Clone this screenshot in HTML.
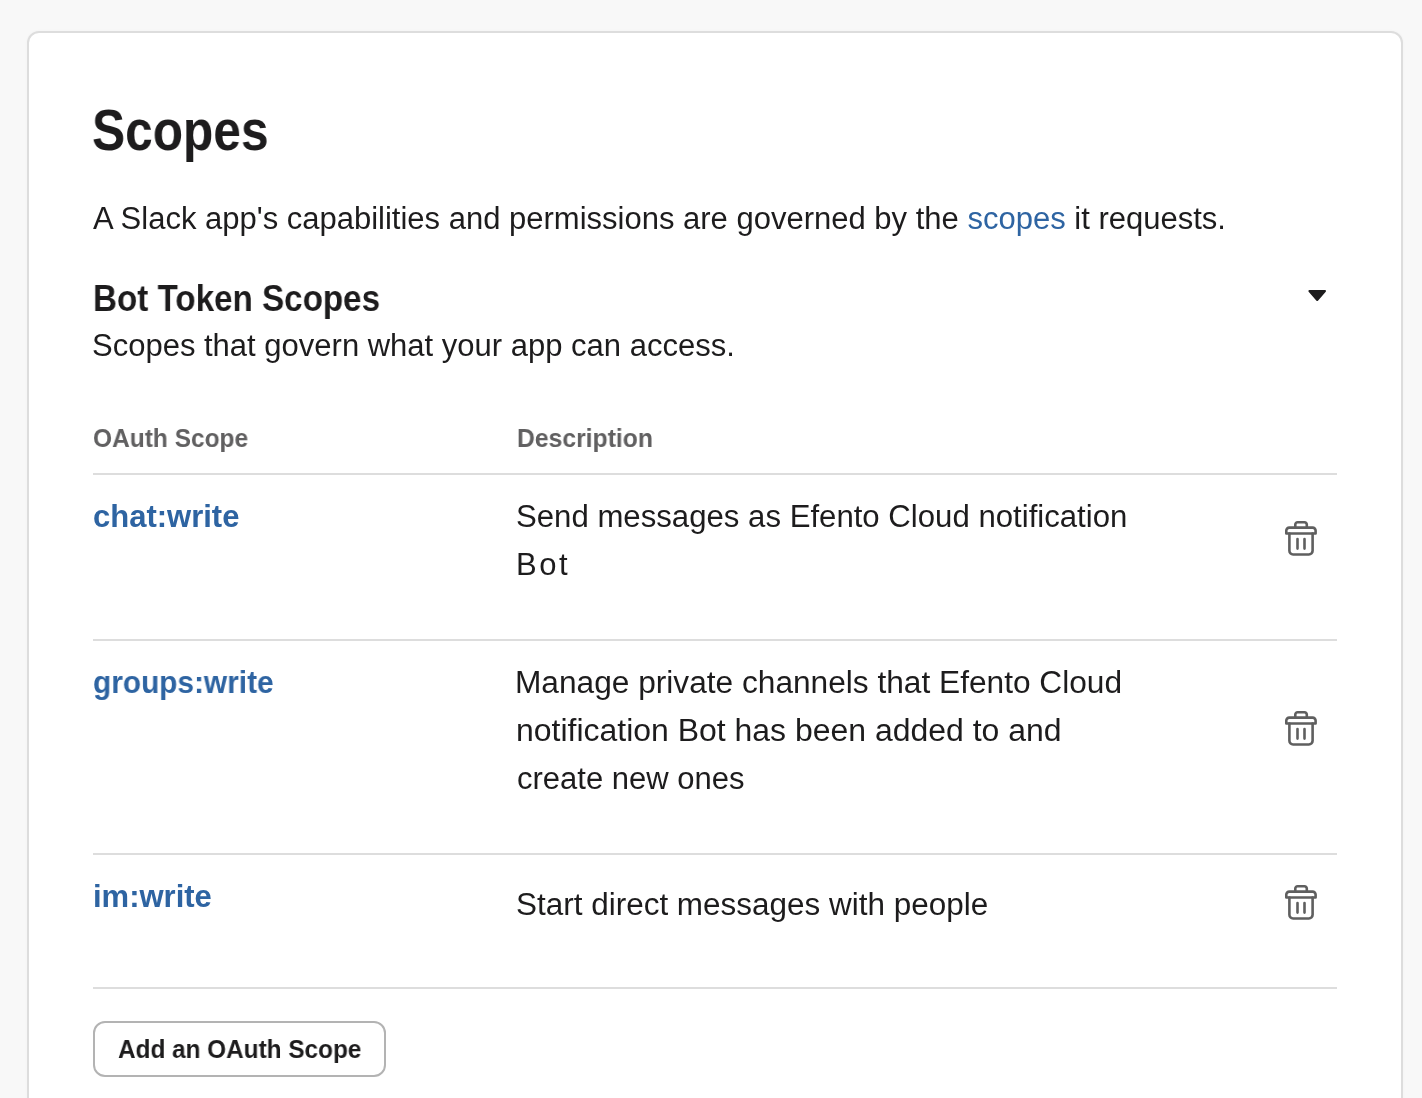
<!DOCTYPE html>
<html>
<head>
<meta charset="utf-8">
<style>
html, body { margin: 0; padding: 0; }
body { width: 1422px; height: 1098px; overflow: hidden; background: #f8f8f8; position: relative; font-family: "Liberation Sans", sans-serif; color: #1d1c1d; }
.card { position: absolute; left: 27px; top: 31px; width: 1372px; box-shadow: 0 0 3px rgba(0,0,0,0.03); height: 1200px; border: 2px solid #dddddd; border-radius: 12px; background: #ffffff; }
.t { position: absolute; white-space: nowrap; line-height: 1; transform-origin: 0 0; will-change: transform; }
.b { font-weight: bold; }
.link { color: #2e64a2; }
.grey { color: #616061; }
.hr { position: absolute; left: 93px; width: 1244px; height: 2px; background: #dddddd; }
.trash { position: absolute; left: 1280px; width: 42px; height: 44px; }
.btn { position: absolute; left: 93px; top: 1021px; width: 289px; height: 52px; border: 2px solid #b3b3b3; border-radius: 12px; background: #fff; }
</style>
</head>
<body>
<div class="card"></div>

<div class="t b" id="title" style="left:92.3px; top:101px; font-size:58px; transform:scaleX(0.856);">Scopes</div>
<div class="t" id="para" style="left:93px; top:203px; font-size:31px;">A Slack app's capabilities and permissions are governed by the <span class="link">scopes</span> it requests.</div>

<div class="t b" id="bts" style="left:92.5px; top:280px; font-size:37px; transform:scaleX(0.897);">Bot Token Scopes</div>
<svg style="position:absolute; left:1300px; top:282px;" width="34" height="26" viewBox="1300 282 34 26">
  <path d="M1309.4 291 L1325 291 L1317.2 300 Z" fill="#1d1c1d" stroke="#1d1c1d" stroke-width="2" stroke-linejoin="round"/>
</svg>
<div class="t" id="sub" style="left:92px; top:330px; font-size:31px;">Scopes that govern what your app can access.</div>

<div class="t b grey" id="h1" style="left:92.5px; top:425px; font-size:26px; transform:scaleX(0.942);">OAuth Scope</div>
<div class="t b grey" id="h2" style="left:516.5px; top:425px; font-size:26px; transform:scaleX(0.95);">Description</div>
<div class="hr" style="top:473px;"></div>

<!-- row 1 -->
<div class="t b link" id="r1s" style="left:92.7px; top:501px; font-size:31px;">chat:write</div>
<div class="t" id="r1d1" style="left:516px; top:501px; font-size:31px; transform:scaleX(1.005);">Send messages as Efento Cloud notification</div>
<div class="t" id="r1d2" style="left:516px; top:549px; font-size:31px; letter-spacing:2.5px;">Bot</div>
<svg class="trash" style="top:516px;" viewBox="0 0 42 44"><g fill="none" stroke="#5f5f5f" stroke-width="2.6" stroke-linecap="round" stroke-linejoin="round"><path d="M15.3 10.5 V8.6 a2.3 2.3 0 0 1 2.3 -2.3 H24.5 a2.3 2.3 0 0 1 2.3 2.3 V10.5"/><path d="M6.3 17.5 V14.6 a3 3 0 0 1 3 -3 H32.6 a3 3 0 0 1 3 3 V17.5 Z"/><path d="M9.4 17.5 V34.8 a3.7 3.7 0 0 0 3.7 3.7 H28.9 a3.7 3.7 0 0 0 3.7 -3.7 V17.5"/><path d="M17.5 23.1 V32.6 M24.5 23.1 V32.6"/></g></svg>
<div class="hr" style="top:639px;"></div>

<!-- row 2 -->
<div class="t b link" id="r2s" style="left:92.7px; top:667px; font-size:31px; transform:scaleX(0.962);">groups:write</div>
<div class="t" id="r2d1" style="left:515.3px; top:667px; font-size:31px; transform:scaleX(1.021);">Manage private channels that Efento Cloud</div>
<div class="t" id="r2d2" style="left:516px; top:715px; font-size:31px; transform:scaleX(1.031);">notification Bot has been added to and</div>
<div class="t" id="r2d3" style="left:517px; top:763px; font-size:31px;">create new ones</div>
<svg class="trash" style="top:706px;" viewBox="0 0 42 44"><g fill="none" stroke="#5f5f5f" stroke-width="2.6" stroke-linecap="round" stroke-linejoin="round"><path d="M15.3 10.5 V8.6 a2.3 2.3 0 0 1 2.3 -2.3 H24.5 a2.3 2.3 0 0 1 2.3 2.3 V10.5"/><path d="M6.3 17.5 V14.6 a3 3 0 0 1 3 -3 H32.6 a3 3 0 0 1 3 3 V17.5 Z"/><path d="M9.4 17.5 V34.8 a3.7 3.7 0 0 0 3.7 3.7 H28.9 a3.7 3.7 0 0 0 3.7 -3.7 V17.5"/><path d="M17.5 23.1 V32.6 M24.5 23.1 V32.6"/></g></svg>
<div class="hr" style="top:853px;"></div>

<!-- row 3 -->
<div class="t b link" id="r3s" style="left:92.5px; top:881px; font-size:31px;">im:write</div>
<div class="t" id="r3d1" style="left:516px; top:889px; font-size:31px; transform:scaleX(1.015);">Start direct messages with people</div>
<svg class="trash" style="top:880px;" viewBox="0 0 42 44"><g fill="none" stroke="#5f5f5f" stroke-width="2.6" stroke-linecap="round" stroke-linejoin="round"><path d="M15.3 10.5 V8.6 a2.3 2.3 0 0 1 2.3 -2.3 H24.5 a2.3 2.3 0 0 1 2.3 2.3 V10.5"/><path d="M6.3 17.5 V14.6 a3 3 0 0 1 3 -3 H32.6 a3 3 0 0 1 3 3 V17.5 Z"/><path d="M9.4 17.5 V34.8 a3.7 3.7 0 0 0 3.7 3.7 H28.9 a3.7 3.7 0 0 0 3.7 -3.7 V17.5"/><path d="M17.5 23.1 V32.6 M24.5 23.1 V32.6"/></g></svg>
<div class="hr" style="top:987px;"></div>

<div class="btn"></div>
<div class="t b" id="btnt" style="left:118px; top:1036px; font-size:26px; transform:scaleX(0.936);">Add an OAuth Scope</div>
</body>
</html>
